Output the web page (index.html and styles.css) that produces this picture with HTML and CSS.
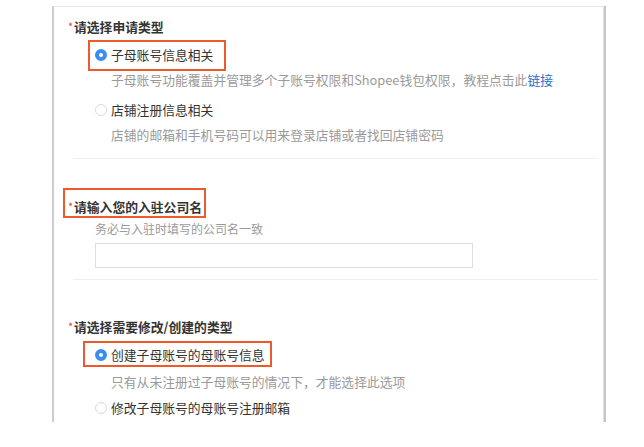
FILE: index.html
```html
<!DOCTYPE html>
<html lang="zh-CN">
<head>
<meta charset="utf-8">
<title>申请类型</title>
<link rel="stylesheet" href="styles.css">
</head>
<body>
<div class="panel">
  <section class="sec sec-first">
    <div class="title"><span class="req">*</span>请选择申请类型</div>
    <div class="opts">
      <div class="radio-row hl hl-a"><span class="radio on"></span><span class="label">子母账号信息相关</span></div>
      <div class="desc">子母账号功能覆盖并管理多个子账号权限和Shopee钱包权限，教程点击此<a class="link">链接</a></div>
      <div class="radio-row gap-opt"><span class="radio"></span><span class="label">店铺注册信息相关</span></div>
      <div class="desc">店铺的邮箱和手机号码可以用来登录店铺或者找回店铺密码</div>
    </div>
  </section>
  <div class="sep sep-a"></div>
  <section class="sec sec-second">
    <div class="title hl hl-b"><span class="req">*</span>请输入您的入驻公司名</div>
    <div class="field">
      <div class="hint">务必与入驻时填写的公司名一致</div>
      <div class="input"></div>
    </div>
  </section>
  <div class="sep sep-b"></div>
  <section class="sec sec-third">
    <div class="title"><span class="req">*</span>请选择需要修改/创建的类型</div>
    <div class="opts">
      <div class="radio-row hl hl-c"><span class="radio on"></span><span class="label">创建子母账号的母账号信息</span></div>
      <div class="desc desc-c">只有从未注册过子母账号的情况下，才能选择此选项</div>
      <div class="radio-row gap-opt-c"><span class="radio"></span><span class="label">修改子母账号的母账号注册邮箱</span></div>
    </div>
  </section>
</div>
</body>
</html>
```
FILE: styles.css
```css
* { box-sizing: border-box; }
html, body { margin: 0; padding: 0; background: #fff; }
body {
  font-family: "Noto Sans CJK SC", "Noto Sans", sans-serif;
  font-size: 12.8px;
  color: #333;
}
.panel {
  margin: 6px 0 0 52px;
  width: 552px;
  border-top: 1px solid #e6e6e6;
  border-left: 2px solid #cdcdcd;
  border-right: 1px solid #e2e2e2;
  box-shadow: 2px 0 0 #c6c6c6;
  padding-bottom: 4px;
  background: #fff;
}
.sec { padding-left: 14px; }
.sec-first { padding-top: 10px; }
.sec-second { padding-top: 38px; }
.sec-third { padding-top: 37px; }

.title {
  line-height: 20px;
  height: 20px;
  font-weight: 700;
  color: #333;
  display: flex;
  align-items: center;
  width: fit-content;
}
.req {
  color: #e8402f;
  font-size: 11px;
  font-weight: 400;
  width: 6px;
  margin-right: 0;
  position: relative;
  top: -1px;
}
.opts {
  margin-top: 8px;
  padding-left: 27px;
}
.radio-row {
  display: flex;
  align-items: center;
  height: 20px;
  line-height: 20px;
  width: fit-content;
  color: #333;
}
.radio {
  width: 12px;
  height: 12px;
  border-radius: 50%;
  border: 1px solid #dcdcdc;
  background: #fff;
  margin-right: 4px;
  flex: none;
}
.radio.on {
  border: 4px solid #3a8ef0;
}
.desc {
  margin-top: 5px;
  padding-left: 16px;
  line-height: 20px;
  color: #9a9a9a;
}
.link { color: #1f6cc4; }
.gap-opt { margin-top: 10px; }
.desc-c { margin-top: 7px; }
.gap-opt-c { margin-top: 6px; }

.field { padding-left: 27px; }
.hint {
  margin-top: 2px;
  font-size: 12px;
  line-height: 20px;
  color: #9a9a9a;
}
.input {
  margin-top: 4px;
  width: 378px;
  height: 25px;
  border: 1px solid #dedede;
  background: #fff;
}

.sep {
  height: 1px;
  background: #eeeeee;
  margin-left: 19px;
  margin-right: 5px;
}
.sep-a { margin-top: 13px; }
.sep-b { margin-top: 11px; }

.hl { position: relative; }
.hl::after {
  content: "";
  position: absolute;
  border: 2px solid #ef5a2a;
  pointer-events: none;
}
.hl-a::after { top: -5px; bottom: -6px; left: -7px; right: -13px; }
.hl-b::after { top: -9px; bottom: -1px; left: -5px; right: -4px; }
.hl-c::after { top: -4px; bottom: -2px; left: -12px; right: -7px; }
```
